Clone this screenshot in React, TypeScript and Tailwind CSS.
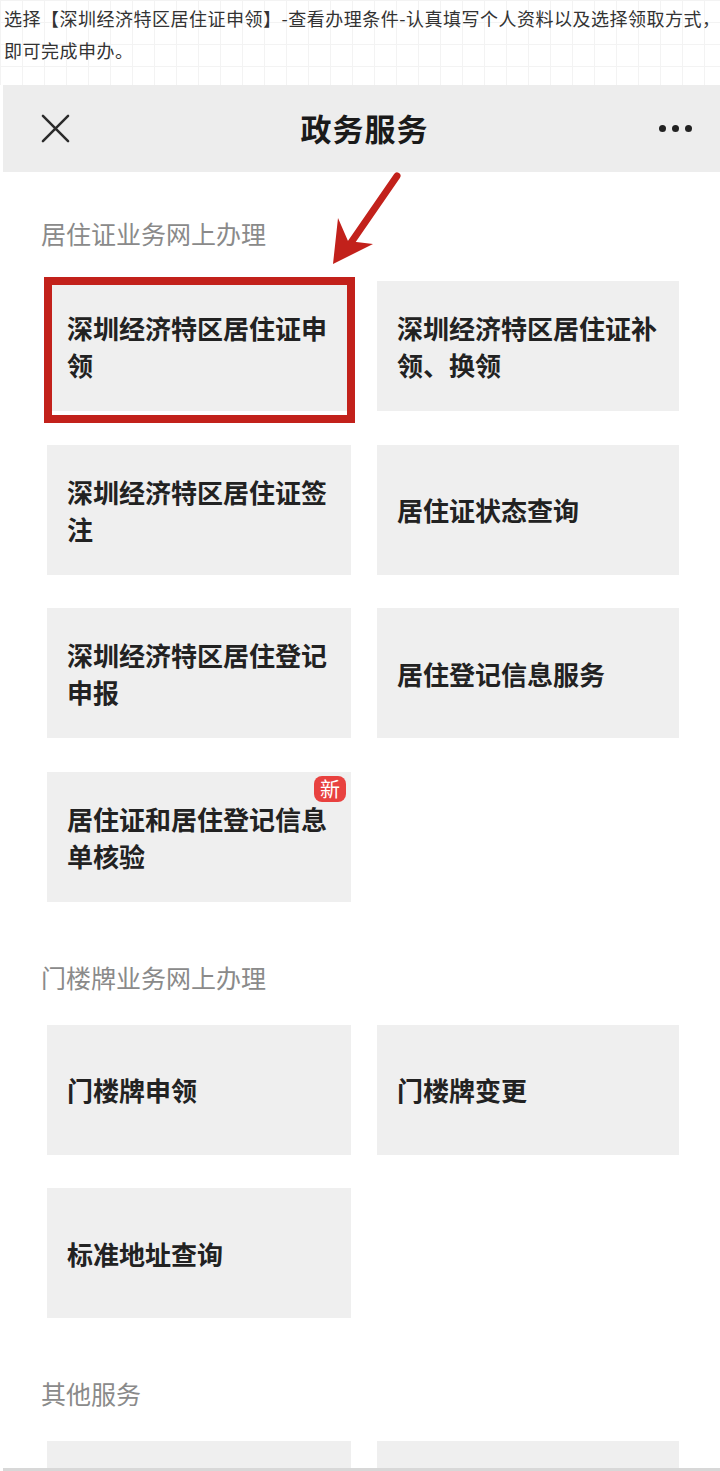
import React from 'react';

type Service = {
  title: string;
  isNew?: boolean;
  highlighted?: boolean;
};

type Section = {
  heading: string;
  items: Service[];
};

const sections: Section[] = [
  {
    heading: '居住证业务网上办理',
    items: [
      { title: '深圳经济特区居住证申领', highlighted: true },
      { title: '深圳经济特区居住证补领、换领' },
      { title: '深圳经济特区居住证签注' },
      { title: '居住证状态查询' },
      { title: '深圳经济特区居住登记申报' },
      { title: '居住登记信息服务' },
      { title: '居住证和居住登记信息单核验', isNew: true }
    ]
  },
  {
    heading: '门楼牌业务网上办理',
    items: [
      { title: '门楼牌申领' },
      { title: '门楼牌变更' },
      { title: '标准地址查询' }
    ]
  },
  {
    heading: '其他服务',
    items: [{ title: '' }, { title: '' }]
  }
];

const CloseIcon = ({ className }: { className?: string }) => (
  <svg className={className} viewBox="0 0 30 30" fill="none" stroke="currentColor">
    <path strokeWidth={2.6} strokeLinecap="round" d="M2 2l26 26M28 2L2 28" />
  </svg>
);

const ServiceCard = ({ item }: { item: Service }) => (
  <div className="relative h-[130px] bg-[#efefef] flex items-center pl-[20px] pr-[16px]">
    <p className="text-[26px] leading-[37px] font-bold text-[#222]">{item.title}</p>
    {item.highlighted && (
      <span
        className="absolute left-[-3px] top-[-4px] right-[-4px] bottom-[-12px] border-[8px] border-[#c2211b]"
        aria-hidden="true"
      />
    )}
    {item.isNew && (
      <span className="absolute right-[5px] top-[4px] w-[32px] h-[26px] rounded-[8px] bg-[#e8413f] text-white text-[20px] leading-[26px] text-center">
        新
      </span>
    )}
  </div>
);

export default function App() {
  return (
    <div
      className="relative w-[720px] h-[1471px] overflow-hidden bg-white"
      style={{ fontFamily: '"Noto Sans CJK SC", "Noto Sans", sans-serif' }}
    >
      {/* article text above the phone screenshot */}
      <div className="h-[85px] pl-[4px] pt-[2px] text-[18px] leading-[32px] tracking-[0.5px] text-[#333] bg-[linear-gradient(to_right,#f3f3f3_1px,transparent_1px),linear-gradient(to_bottom,#f3f3f3_1px,transparent_1px)] bg-[size:22px_22px]">
        <div className="whitespace-nowrap">
          选择【深圳经济特区居住证申领】-查看办理条件-认真填写个人资料以及选择领取方式，
        </div>
        <div className="whitespace-nowrap">即可完成申办。</div>
      </div>

      {/* phone screenshot */}
      <div className="ml-[3px] h-[1386px] overflow-hidden bg-white border-b-[3px] border-[#d8d8d8]">
        <div className="h-[87px] bg-[#ededed] flex items-center">
          <div className="w-[120px] pl-[38px]">
            <CloseIcon className="w-[29px] h-[29px] text-[#2b2b2b]" />
          </div>
          <h1 className="flex-1 text-center text-[31px] font-semibold text-[#1a1a1a] tracking-[1px] pl-[6px]">
            政务服务
          </h1>
          <div className="w-[120px] flex justify-end gap-[6px] pr-[28px]">
            <span className="w-[7px] h-[7px] rounded-full bg-[#222]" />
            <span className="w-[7px] h-[7px] rounded-full bg-[#222]" />
            <span className="w-[7px] h-[7px] rounded-full bg-[#222]" />
          </div>
        </div>

        {sections.map((section, idx) => (
          <section key={section.heading} className={idx === 0 ? 'mt-[43px]' : 'mt-[57px]'}>
            <h2 className="pl-[38px] text-[25px] leading-[36px] text-[#8a8a8a]">{section.heading}</h2>
            <div className="mt-[30px] ml-[44px] grid grid-cols-[304px_302px] gap-x-[26px] gap-y-[33.5px]">
              {section.items.map((item, i) => (
                <ServiceCard key={i} item={item} />
              ))}
            </div>
          </section>
        ))}
      </div>

      {/* red annotation arrow */}
      <svg className="absolute left-0 top-0 w-[720px] h-[1471px] pointer-events-none" viewBox="0 0 720 1471">
        <path d="M397 176L348 247" stroke="#c2211b" strokeWidth={7} strokeLinecap="round" />
        <path d="M333 264L338 218L348 241L373 244Z" fill="#c2211b" />
      </svg>
    </div>
  );
}
